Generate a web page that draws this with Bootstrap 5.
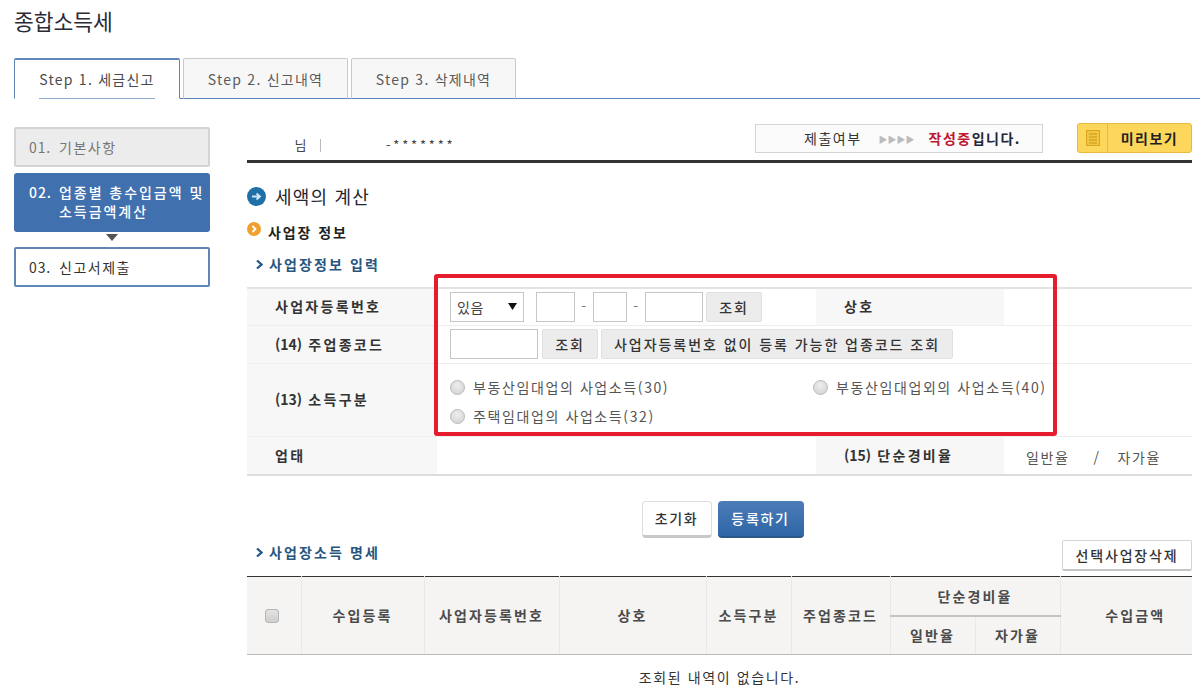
<!DOCTYPE html>
<html lang="ko">
<head>
<meta charset="utf-8">
<title>종합소득세</title>
<link href="https://cdn.jsdelivr.net/npm/bootstrap@5.3.0/dist/css/bootstrap.min.css" rel="stylesheet">
<style>
html,body{height:696px;overflow:hidden}
body{font-family:"Noto Sans CJK KR","Liberation Sans",sans-serif;font-size:14px;color:#333;background:#fff;letter-spacing:.6px}
.page-wrap{padding:0 8px 0 14px}
.page-title{font-size:21.5px;font-weight:400;margin:0;height:58px;padding-top:6px;line-height:30px;color:#2b2b35;letter-spacing:0}
.step-tabs{height:41px;border-bottom:1px solid #5f86b8;gap:3px;margin-right:-8px;flex-wrap:nowrap}
.step-tabs .nav-link{width:165px;height:41px;padding:0;margin:0;border:1px solid #c9c9c9;border-bottom:1px solid #5f86b8;border-radius:2px 2px 0 0;background:#f7f7f7;color:#5a5a5a;text-align:center;line-height:40px;font-size:14px;letter-spacing:1.25px}
.step-tabs .nav-link.active{width:166px;border:1px solid #5f86b8;border-top-width:2px;border-bottom-color:#fff;background:#fff;color:#4a4a4a;line-height:39px}
.step-tabs .nav-link>span{display:inline-block;height:40px;border-bottom:1px solid #5f86b8}
.step-tabs .nav-link.active>span{height:39px;border-bottom-color:#8fabd0}
.body-flex{gap:37px;padding-top:28px}
.side-col{width:196px;flex:none}
.side-step{border:2px solid #5f86b8;border-radius:2px;height:40px;padding:0 13px;font-size:14px;line-height:36px;color:#333;letter-spacing:1.5px;background:#fff;display:flex}
.side-num{flex:none;width:30px;letter-spacing:.9px}
.side-done{background:#ececec;border-color:#d4d4d4;color:#777}
.side-active{background:#4170ae;border:0;border-radius:3px;color:#fff;height:59px;margin-top:6px;padding:10px 0 0 15px;font-weight:500;line-height:19px;letter-spacing:1.95px;white-space:nowrap}
.side-arrow{display:flex;justify-content:center;height:15px;padding-top:2px}
.main-col{width:945px;flex:none}
.top-strip{height:36px;border-bottom:3px solid #333;width:945px;align-items:flex-start}
.who{width:508px;padding-top:8px;font-size:13px;display:flex;color:#444}
.who-name{width:73px;text-align:right;padding-right:13px}
.who-sep{width:1px;height:13px;background:#bbb;margin-top:4px}
.who-id{margin-left:65px;letter-spacing:2.8px}
.status-box{width:288px;height:29px;margin-top:-3px;border:1px solid #d4d4d4;background:#fbfbfb;font-size:14px;line-height:27px;padding-left:48px;white-space:nowrap;letter-spacing:1.5px}
.status-gt{color:#bbb;letter-spacing:0;font-size:9px;margin:0 14px 0 17px;vertical-align:1px}
.status-red{color:#c01730;font-weight:700}
.status-dark{color:#25253a;font-weight:700}
.preview-btn{width:115px;height:30px;margin:-4px 0 0 34px;border:1px solid #e8b93a;border-radius:3px;background:#fcd75c;color:#222;padding:0;display:flex;font-size:14px;font-weight:700;line-height:28px;letter-spacing:1.5px}
.preview-ico{width:30px;border-right:1px solid #e8b93a;display:flex;align-items:center;justify-content:center;flex:none}
.preview-lbl{flex:1;text-align:center}
.h-calc{font-size:18px;font-weight:400;margin:18px 0 11px;height:30px;line-height:24px;display:flex;align-items:center;gap:9px;color:#25252f;letter-spacing:1.2px}
.h-info{font-size:14px;font-weight:700;margin:0;height:32px;line-height:20px;display:flex;align-items:flex-start;gap:7px;color:#222;letter-spacing:1.9px}
.h-input{font-size:14px;font-weight:700;margin:0;line-height:20px;color:#27557f;letter-spacing:2.1px;padding-left:9px;display:flex;align-items:center;gap:6px}
.form-wrap{position:relative;margin-top:13px}
.red-frame{position:absolute;left:187px;top:-13px;width:623px;height:162px;border:4px solid #e51c2e;border-radius:3px;pointer-events:none}
.info-table{width:945px;table-layout:fixed;border-collapse:collapse;border-top:2px solid #e3e3e3;border-bottom:2px solid #ddd}
.info-table th,.info-table td{padding:0;border-bottom:1px solid #eee;vertical-align:middle;font-size:14px}
.info-table th{background:#f7f7f7;font-weight:700;color:#333;padding-left:28px;letter-spacing:2.3px}
.tag-num{letter-spacing:0}
.info-table td{padding-left:13px;color:#555}
.w-th1{width:190px}.w-td1{width:379px}.w-th2{width:188px}.w-td2{width:188px}
.row-a{height:37px}.row-b{height:38px}.row-c{height:73px}.row-d{height:39px}
.fld{height:30px;border:1px solid #c6c6c6;background:#fff;display:block;flex:none;border-radius:0;padding:0}
.sel-box{width:74px;height:30px;border:1px solid #c6c6c6;background:#fff;font-size:14px;color:#444;padding:0 6px;line-height:28px;display:flex;justify-content:space-between;align-items:center;flex:none;margin-right:12px}
.f-39{width:39px}.f-33{width:34px}.f-58{width:58px}.f-88{width:88px}
.dash{width:18px;text-align:center;color:#777;flex:none}
.gray-btn{height:30px;border:1px solid #e0e0e0;border-radius:2px;background:#ececec;color:#333;font-size:14px;font-weight:500;padding:0;line-height:28px;flex:none;letter-spacing:1.95px;text-align:center}
.gb-56{width:56px;margin-left:3px}.gb-352{width:352px;margin-left:3px}
.rad{width:15px;height:15px;border-radius:50%;flex:none;border:1px solid #bbb;background:radial-gradient(circle at 50% 35%,#eee,#cfcfcf);display:inline-block;margin-right:8px}
.rad-line{display:flex;align-items:center;font-size:14px;color:#555;letter-spacing:1.6px;white-space:nowrap}
.rad-col{width:363px}
.rad-stack{padding-top:4px}
.ratio-line{display:flex;font-size:14px;color:#555;padding-left:9px;letter-spacing:1.6px;padding-top:4px}
.ratio-line i{font-style:normal;margin:0 17px 0 24px}
.act-row{gap:6px;justify-content:center;display:flex;height:100px;padding:25px 0 0 6px}
.act-btn{height:37px;border-radius:4px;font-size:14px;font-weight:500;padding:0;letter-spacing:1.7px;line-height:33px}
.act-reset{width:70px;background:#fff;border:1px solid #ddd;border-bottom:3px solid #c8c8c8;color:#333}
.act-save{width:86px;background:linear-gradient(#4d7cb8,#2e66a6);border:0;border-bottom:2px solid #2a5688;color:#fff}
.list-head{height:36px;margin-top:-36px;align-items:flex-start;justify-content:space-between;position:relative}
.h-list{padding-top:2px}
.del-btn{width:130px;height:31px;border:1px solid #d5d5d5;border-bottom:2px solid #c5c5c5;border-radius:2px;background:#fff;color:#333;font-size:14px;font-weight:500;padding:0;line-height:27px;letter-spacing:1.85px}
.list-table{width:945px;table-layout:fixed;border-collapse:collapse;border-top:1px solid #333;border-bottom:1px solid #bbb}
.list-table th{background:#f5f4f2;font-size:14px;font-weight:700;color:#4b4b4b;text-align:center;vertical-align:middle;padding:0;border-left:1px solid #e8e8e8;border-bottom:1px solid #bbb;height:39px;letter-spacing:2.1px}
.list-table tr:first-child th:first-child{border-left:0}
.list-table .under{border-bottom:2px solid #c4c4c4;padding-top:2px}
.list-table .amt-col{padding-left:18px}
.c1{width:54px}.c2{width:123px}.c3{width:135px}.c4{width:147px}.c5{width:85px}.c6{width:99px}.c7{width:85px}.c8{width:85px}.c9{width:132px}
.chk{width:14px;height:14px;border:1px solid #b5b5b5;border-radius:3px;background:linear-gradient(#e2e2e2,#cfcfcf);display:block;margin:0 auto 0 18px}
.empty-msg{text-align:center;font-size:14px;color:#333;padding-top:12px;letter-spacing:1.6px;white-space:nowrap}
</style>
</head>
<body>
<div class="page-wrap">
  <h1 class="page-title">종합소득세</h1>
  <ul class="nav nav-tabs step-tabs">
    <li class="nav-item"><a class="nav-link active" href="#"><span>Step 1. 세금신고</span></a></li>
    <li class="nav-item"><a class="nav-link" href="#"><span>Step 2. 신고내역</span></a></li>
    <li class="nav-item"><a class="nav-link" href="#"><span>Step 3. 삭제내역</span></a></li>
  </ul>
  <div class="d-flex body-flex">
    <aside class="side-col">
      <div class="side-step side-done"><span class="side-num">01.</span><span>기본사항</span></div>
      <div class="side-step side-active"><span class="side-num">02.</span><span>업종별 총수입금액 및<br>소득금액계산</span></div>
      <div class="side-arrow"><svg width="12" height="7" viewBox="0 0 12 7"><path d="M0 0H12L6 7Z" fill="#555"/></svg></div>
      <div class="side-step"><span class="side-num">03.</span><span>신고서제출</span></div>
    </aside>
    <main class="main-col">
      <div class="d-flex top-strip">
        <div class="who"><span class="who-name">님</span><span class="who-sep"></span><span class="who-id">-*******</span></div>
        <div class="status-box">제출여부<span class="status-gt">▶▶▶▶</span><span class="status-red">작성중</span><span class="status-dark">입니다.</span></div>
        <button type="button" class="preview-btn"><span class="preview-ico"><svg width="14" height="16" viewBox="0 0 14 16"><rect x=".5" y=".5" width="13" height="15" fill="#f2c53f" stroke="#d9a520"/><path d="M3 4H11M3 7H11M3 10H11M3 13H11" stroke="#c9981e"/></svg></span><span class="preview-lbl">미리보기</span></button>
      </div>
      <h2 class="h-calc"><svg width="19" height="19" viewBox="0 0 19 19"><circle cx="9.5" cy="9.5" r="9.5" fill="#1f6fa8"/><path d="M5 9.5H12M9.5 6.5L13 9.5L9.5 12.5" fill="none" stroke="#cfe6f5" stroke-width="1.8"/></svg>세액의 계산</h2>
      <h3 class="h-info"><svg width="14" height="14" viewBox="0 0 14 14"><circle cx="7" cy="7" r="7" fill="#f0a030"/><path d="M5.5 4L8.5 7L5.5 10" fill="none" stroke="#fff" stroke-width="1.8"/></svg>사업장 정보</h3>
      <h4 class="h-input"><svg width="7" height="9" viewBox="0 0 7 9"><path d="M1 .5L5.5 4.5L1 8.5" fill="none" stroke="#1d5a8c" stroke-width="2.2"/></svg>사업장정보 입력</h4>
      <div class="form-wrap">
        <table class="info-table">
          <colgroup><col class="w-th1"><col class="w-td1"><col class="w-th2"><col class="w-td2"></colgroup>
          <tbody>
          <tr class="row-a">
            <th>사업자등록번호</th>
            <td><div class="d-flex align-items-center"><div class="sel-box"><span>있음</span><svg width="9" height="7" viewBox="0 0 9 7"><path d="M0 0H9L4.5 7Z" fill="#111"/></svg></div><span class="fld f-39"></span><span class="dash">-</span><span class="fld f-33"></span><span class="dash">-</span><span class="fld f-58"></span><button type="button" class="gray-btn gb-56">조회</button></div></td>
            <th>상호</th>
            <td></td>
          </tr>
          <tr class="row-b">
            <th><span class="tag-num">(14)</span> 주업종코드</th>
            <td colspan="3"><div class="d-flex align-items-center"><span class="fld f-88"></span><button type="button" class="gray-btn gb-56 ms-1">조회</button><button type="button" class="gray-btn gb-352">사업자등록번호 없이 등록 가능한 업종코드 조회</button></div></td>
          </tr>
          <tr class="row-c">
            <th><span class="tag-num">(13)</span> 소득구분</th>
            <td colspan="3">
              <div class="d-flex flex-column gap-2 rad-stack">
                <div class="d-flex"><label class="rad-line rad-col"><span class="rad"></span>부동산임대업의 사업소득(30)</label><label class="rad-line"><span class="rad"></span>부동산임대업외의 사업소득(40)</label></div>
                <label class="rad-line"><span class="rad"></span>주택임대업의 사업소득(32)</label>
              </div>
            </td>
          </tr>
          <tr class="row-d">
            <th>업태</th>
            <td></td>
            <th><span class="tag-num">(15)</span> 단순경비율</th>
            <td><div class="ratio-line"><span>일반율</span><i>/</i><span>자가율</span></div></td>
          </tr>
          </tbody>
        </table>
        <div class="red-frame"></div>
      </div>
      <div class="act-row">
        <button type="button" class="act-btn act-reset">초기화</button>
        <button type="button" class="act-btn act-save">등록하기</button>
      </div>
      <div class="d-flex list-head">
        <h4 class="h-input h-list"><svg width="7" height="9" viewBox="0 0 7 9"><path d="M1 .5L5.5 4.5L1 8.5" fill="none" stroke="#1d5a8c" stroke-width="2.2"/></svg>사업장소득 명세</h4>
        <button type="button" class="del-btn">선택사업장삭제</button>
      </div>
      <table class="list-table">
        <colgroup><col class="c1"><col class="c2"><col class="c3"><col class="c4"><col class="c5"><col class="c6"><col class="c7"><col class="c8"><col class="c9"></colgroup>
        <thead>
          <tr>
            <th rowspan="2"><span class="chk"></span></th>
            <th rowspan="2">수입등록</th>
            <th rowspan="2">사업자등록번호</th>
            <th rowspan="2">상호</th>
            <th rowspan="2">소득구분</th>
            <th rowspan="2">주업종코드</th>
            <th colspan="2" class="under">단순경비율</th>
            <th rowspan="2" class="amt-col">수입금액</th>
          </tr>
          <tr><th>일반율</th><th>자가율</th></tr>
        </thead>
      </table>
      <div class="empty-msg">조회된 내역이 없습니다.</div>
    </main>
  </div>
</div>
<script src="https://cdn.jsdelivr.net/npm/bootstrap@5.3.0/dist/js/bootstrap.bundle.min.js"></script>
</body>
</html>
